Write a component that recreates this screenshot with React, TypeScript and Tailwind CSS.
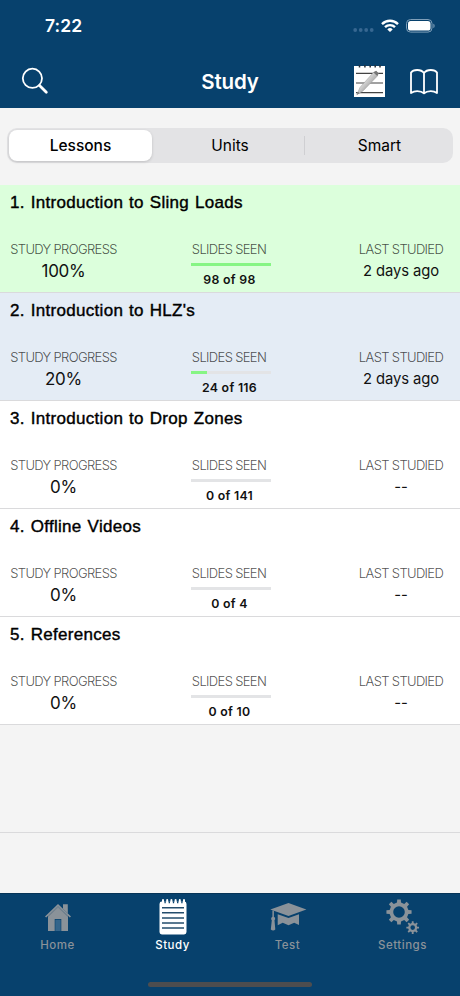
import { useState, type ReactNode } from 'react';
import clsx from 'clsx';

interface Lesson {
  title: string;
  progress: number;
  seen: number;
  total: number;
  last: string;
  tone: string;
}

const LESSONS: Lesson[] = [
  { title: '1. Introduction to Sling Loads', progress: 100, seen: 98, total: 98, last: '2 days ago', tone: 'bg-[#dcffdc]' },
  { title: "2. Introduction to HLZ's", progress: 20, seen: 24, total: 116, last: '2 days ago', tone: 'bg-[#e4ecf5]' },
  { title: '3. Introduction to Drop Zones', progress: 0, seen: 0, total: 141, last: '--', tone: 'bg-white' },
  { title: '4. Offline Videos', progress: 0, seen: 0, total: 4, last: '--', tone: 'bg-white' },
  { title: '5. References', progress: 0, seen: 0, total: 10, last: '--', tone: 'bg-white' },
];

const SEGMENTS = ['Lessons', 'Units', 'Smart'];

/** Outline of a cog with `teeth` teeth and a round hole in the middle. */
function gearPath(cx: number, cy: number, outer: number, inner: number, hole: number, teeth: number) {
  const step = (Math.PI * 2) / teeth;
  const points: string[] = [];
  for (let i = 0; i < teeth; i++) {
    const a = i * step - Math.PI / 2;
    const corners = [
      [inner, -0.27],
      [outer, -0.18],
      [outer, 0.18],
      [inner, 0.27],
    ];
    for (const [r, t] of corners) {
      points.push(`${(cx + r * Math.cos(a + t * step)).toFixed(2)} ${(cy + r * Math.sin(a + t * step)).toFixed(2)}`);
    }
  }
  return `M${points.join('L')}ZM${cx - hole} ${cy}a${hole} ${hole} 0 1 0 ${hole * 2} 0a${hole} ${hole} 0 1 0 ${-hole * 2} 0Z`;
}

function StatusBar() {
  return (
    <div className="flex h-[54px] items-start justify-between pl-[45px] pr-[24px]">
      <span className="mt-[14px] text-[17.5px] font-semibold leading-6 tracking-[0.1px]">7:22</span>
      <div className="mt-[18px] flex items-center">
        <svg width="21" height="6" viewBox="0 0 21 6" className="mr-[7px] mt-[9px]" fill="#376791">
          <circle cx="2.2" cy="3" r="1.9" />
          <circle cx="7.7" cy="3" r="1.9" />
          <circle cx="13.2" cy="3" r="1.9" />
          <circle cx="18.7" cy="3" r="1.9" />
        </svg>
        <svg width="18" height="14" viewBox="0 0 18 14" className="mr-[7px]" fill="none" stroke="white" strokeWidth="2.4">
          <path d="M1 5.1a11.4 11.4 0 0 1 16 0" />
          <path d="M4 8.2a7.1 7.1 0 0 1 10 0" />
          <path d="M6.3 10.4a3.8 3.8 0 0 1 5.4 0L9 13.1Z" fill="white" stroke="none" />
        </svg>
        <svg width="30" height="14" viewBox="0 0 30 14">
          <rect x="0.5" y="0.5" width="25.5" height="12.6" rx="4" fill="none" stroke="#7f9fb9" />
          <rect x="2" y="2" width="22.5" height="9.6" rx="2.7" fill="white" />
          <path d="M27.4 4.7c1.6.5 1.6 3.7 0 4.2Z" fill="#7f9fb9" />
        </svg>
      </div>
    </div>
  );
}

function NotepadPencilIcon() {
  return (
    <svg width="31" height="32" viewBox="0 0 31 32">
      <defs>
        <linearGradient id="pencil" x1="0" y1="0" x2="1" y2="1">
          <stop offset="0.3" stopColor="#ededed" />
          <stop offset="0.65" stopColor="#a5a5a5" />
        </linearGradient>
      </defs>
      <path d="M0 1h31v31H0Z" fill="white" />
      <path d="M5.5 0v2.6M10.9 0v2.6M16.2 0v2.6M21.2 0v2.6M26 0v2.6" stroke="#26323c" strokeWidth="1.5" />
      <path d="M2 8.3h27M2 18h27M2 27.7h27" stroke="#444" strokeWidth="1.2" />
      <path d="M2.8 29.7 6 22.4 19.6 7.3 22 6.2 24.2 8.4 23.4 11 9 25.9Z" fill="url(#pencil)" stroke="#999" strokeWidth="0.5" />
      <path d="m19.4 7.4 2.8-1.6 2.3 2.4-1.2 2.8Z" fill="#777" />
      <path d="m2.8 29.7 1.3-3 1.4 1.6Z" fill="#777" />
    </svg>
  );
}

function NavBar() {
  return (
    <div className="grid h-[54px] grid-cols-[1fr_auto_1fr] items-center pl-[21px] pr-[21px]">
      <svg width="28" height="28" viewBox="0 0 28 28" fill="none" stroke="white" strokeLinecap="round">
        <circle cx="11.4" cy="11.3" r="9.6" strokeWidth="1.8" />
        <path d="m18.5 18.5 6.8 6.8" strokeWidth="2.8" />
      </svg>
      <h1 className="pt-px text-[20.5px] font-semibold leading-6 tracking-[-0.1px]">Study</h1>
      <div className="flex items-center justify-self-end">
        <NotepadPencilIcon />
        <svg width="30" height="26" viewBox="0 0 30 26" className="ml-[24px] mt-px" fill="none" stroke="white" strokeWidth="1.8" strokeLinejoin="round">
          <path d="M15 4.1C13.4 1.8 10.9 1 8.2 1 5.5 1 3.2 1.8 2 3.6V24c1.7-1.2 3.7-1.9 6.2-1.9 2.8 0 5.2.7 6.8 2.3 1.6-1.6 4-2.3 6.8-2.3 2.5 0 4.5.7 6.2 1.9V3.6C26.8 1.8 24.5 1 21.8 1 19.1 1 16.6 1.8 15 4.1ZV24" />
        </svg>
      </div>
    </div>
  );
}

function Segments() {
  const [active, setActive] = useState(0);
  return (
    <div className="flex h-[76px] shrink-0 px-[7px] pt-[20px]">
      <div className="grid h-[35px] w-full grid-cols-[143px_152px_147px] rounded-[10px] bg-[#e3e3e5] p-[2px]">
        {SEGMENTS.map((label, i) => (
          <button
            key={label}
            type="button"
            onClick={() => setActive(i)}
            className={clsx(
              'relative text-[15.5px] leading-5 text-black',
              i === active ? 'rounded-[8px] bg-white font-medium shadow-[0_1px_3px_rgba(0,0,0,0.16)]' : 'pl-[4px] font-normal',
            )}
          >
            {label}
            {i === 2 && active === 0 && <span className="absolute left-0 top-[6px] h-[19px] w-px bg-[#cfcfd2]" />}
          </button>
        ))}
      </div>
    </div>
  );
}

function Label({ children }: { children: ReactNode }) {
  return <span className="whitespace-nowrap text-[13px] font-light leading-4 tracking-[-0.65px] text-black/70">{children}</span>;
}

function LessonRow({ lesson }: { lesson: Lesson }) {
  return (
    <li className={clsx('h-[108px] border-b border-[#dadadc]', lesson.tone)}>
      <h2 className="pl-[10px] pt-[6px] font-['Liberation_Sans',sans-serif] text-[17px] leading-[23px] tracking-[0.3px] text-black [-webkit-text-stroke:0.4px_black] [word-spacing:0.9px]">
        {lesson.title}
      </h2>
      <div className="mt-[27px] grid grid-cols-[107px_80px_82px] justify-between pl-[10px] pr-[18px]">
        <div className="flex flex-col items-center">
          <Label>STUDY PROGRESS</Label>
          <span className="mt-[4px] text-[17px] leading-5 tracking-[-0.3px]">{lesson.progress}%</span>
        </div>
        <div className="-ml-[8px] flex w-[80px] flex-col items-center">
          <div className="flex pr-[3px]">
            <Label>SLIDES SEEN</Label>
          </div>
          <div className="mt-[6px] h-[3px] w-[80px] bg-[#e3e4e6]">
            <div className="h-full bg-[#86f584]" style={{ width: `${lesson.progress}%` }} />
          </div>
          <span className="mt-[6px] whitespace-nowrap pr-[2px] text-[12.3px] font-semibold leading-4 tracking-[0.3px]">
            {lesson.seen} of {lesson.total}
          </span>
        </div>
        <div className="flex flex-col items-center">
          <Label>LAST STUDIED</Label>
          <span className="mt-[4px] whitespace-nowrap text-[14.8px] leading-5 tracking-[-0.1px]">{lesson.last}</span>
        </div>
      </div>
    </li>
  );
}

function HomeIcon() {
  return (
    <svg width="28" height="28" viewBox="0 0 28 28" fill="currentColor">
      <path d="M19 1.2h4.8v9.2L19 5.8Z" />
      <path d="M14 1 1 13.5l1.2.9L14 3.2l11.8 11.2 1.2-.9Z" />
      <path fillRule="evenodd" d="M14 2.9 4 12.7v15.5h20V12.7ZM10.7 16h6.6v12.2h-6.6Z" />
      <path d="M4 13.9 14 4.2l10 9.7" fill="none" stroke="#586f80" strokeWidth="0.5" />
      <path d="M11.3 16.7h5.4v11.5h-5.4Z" fill="#33658b" />
    </svg>
  );
}

function NotepadIcon() {
  return (
    <svg width="28" height="36" viewBox="0 0 28 36">
      <rect x="0.5" y="2.5" width="27" height="33" rx="2.4" fill="white" />
      <path d="M4 1v4M8.2 1v4M12.4 1v4M16.6 1v4M20.8 1v4M25 1v4" stroke="white" strokeWidth="2" strokeLinecap="round" />
      <path d="M6.1 2.3v2M10.3 2.3v2M14.5 2.3v2M18.7 2.3v2M22.9 2.3v2" stroke="#07416d" strokeWidth="1.3" />
      <path d="M3 8.7h22M3 13.8h22M3 18.9h22M3 24h22M3 29.1h22" stroke="#244d6c" strokeWidth="1.5" />
    </svg>
  );
}

function CapIcon() {
  return (
    <svg width="38" height="30" viewBox="0 0 38 30" fill="currentColor">
      <path d="M19.5 1 1.3 7.4l18.2 6.5L37.4 7.4Z" />
      <path d="m8.7 12.2 10.8 3.9 10.5-3.8v10.8l-4.8-2.4-5.7 2.6-5.8-2.6-5 2.5Z" />
      <path d="M3.4 8.4h1.5v7.2H3.4Z" />
      <path d="M4.2 14.7a2 2 0 0 1 1.3 3.5l.8 9.3q-2.1 1.8-4.5 0l1-9.3a2 2 0 0 1 1.4-3.5Z" />
    </svg>
  );
}

function GearsIcon() {
  return (
    <svg width="34" height="36" viewBox="0 0 34 36" fill="currentColor" fillRule="evenodd">
      <path d={gearPath(13, 13, 12.7, 9.6, 5.8, 8)} />
      <path d={gearPath(26.7, 28.6, 6.4, 4.6, 2.3, 8)} />
    </svg>
  );
}

const TABS = [
  { label: 'Home', icon: HomeIcon },
  { label: 'Study', icon: NotepadIcon },
  { label: 'Test', icon: CapIcon },
  { label: 'Settings', icon: GearsIcon },
];

function TabBar() {
  return (
    <nav className="flex h-[103px] shrink-0 flex-col border-t border-[#063457] bg-[#07416d]">
      <div className="grid grid-cols-4 pt-[4px]">
        {TABS.map(({ label, icon: Icon }) => (
          <div key={label} className={clsx('flex flex-col items-center', label === 'Study' ? 'text-white' : 'text-[#8a9299]')}>
            <div className="grid h-[38px] place-items-center">
              <Icon />
            </div>
            <span className="mt-px text-[11.5px] font-medium leading-4 tracking-[0.5px]">{label}</span>
          </div>
        ))}
      </div>
      <div className="mx-auto mb-[9px] mt-auto h-[5px] w-[164px] rounded-full bg-[#4d4d4f]" />
    </nav>
  );
}

export default function App() {
  return (
    <div className="flex h-[996px] w-[460px] flex-col overflow-hidden bg-[#f4f4f4] font-['Inter',sans-serif] text-[#111]">
      <header className="h-[108px] shrink-0 bg-[#07416d] text-white">
        <StatusBar />
        <NavBar />
      </header>
      <Segments />
      <ul className="flex-1 pt-px">
        {LESSONS.map((lesson) => (
          <LessonRow key={lesson.title} lesson={lesson} />
        ))}
        <li className="h-[108px] border-b border-[#dadadc]" />
      </ul>
      <TabBar />
    </div>
  );
}
